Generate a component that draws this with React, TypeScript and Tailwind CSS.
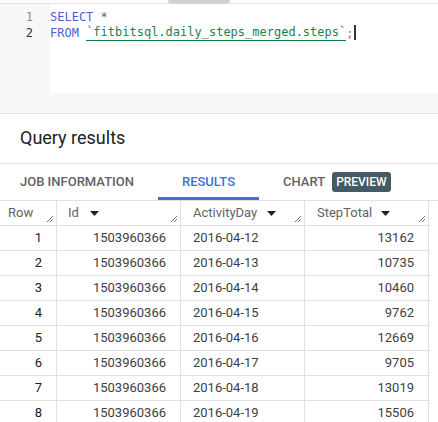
import React from "react";

const rows: [number, string, string, string][] = [
  [1, "1503960366", "2016-04-12", "13162"],
  [2, "1503960366", "2016-04-13", "10735"],
  [3, "1503960366", "2016-04-14", "10460"],
  [4, "1503960366", "2016-04-15", "9762"],
  [5, "1503960366", "2016-04-16", "12669"],
  [6, "1503960366", "2016-04-17", "9705"],
  [7, "1503960366", "2016-04-18", "13019"],
  [8, "1503960366", "2016-04-19", "15506"],
];

function Caret() {
  return (
    <svg width="9" height="5" viewBox="0 0 9 5" className="shrink-0">
      <path d="M0 0 L9 0 L4.5 5 Z" fill="#202124" />
    </svg>
  );
}

function Resize() {
  return (
    <svg width="7" height="7" viewBox="0 0 7 7" className="absolute right-[3px] bottom-[3px]">
      <path d="M1 7 L7 1 M4 7 L7 4" stroke="#5f6368" strokeWidth="0.9" />
    </svg>
  );
}

export default function App() {
  return (
    <div
      className="w-[438px] h-[422px] overflow-hidden bg-white flex flex-col relative"
      style={{ fontFamily: "Roboto, 'Noto Sans', sans-serif" }}
    >
      {/* top strip */}
      <div className="h-[4px] border-b border-[#e3e3e3] bg-white shrink-0 flex">
        <div className="ml-[168px] w-[62px] h-[2px] bg-[#cfcfcf] rounded-b-[2px] shadow-[0_1px_2px_rgba(0,0,0,0.25)]" />
      </div>

      {/* editor */}
      <div
        className="h-[89px] flex shrink-0 text-[12px] leading-[16px]"
        style={{ fontFamily: "'DejaVu Sans Mono', 'Liberation Mono', monospace" }}
      >
        <div className="w-[50px] bg-[#f8f8f8] pt-[5px] pr-[17px] text-right">
          <div className="text-[#8a8a8a]">1</div>
          <div className="text-[#333333]">2</div>
        </div>
        <div className="flex-1 bg-white pt-[5px] whitespace-pre">
          <div>
            <span className="text-[#4e5fd0]">SELECT</span>
            <span className="text-[#5f6368]"> *</span>
          </div>
          <div className="flex items-start">
            <span className="text-[#4e5fd0]">FROM </span>
            <span className="text-[#2a7d4f] border-b border-[#0b8043] leading-[15px]">
              `fitbitsql.daily_steps_merged.steps`
            </span>
            <span className="text-[#8a8a8a]">;</span>
            <span className="w-[2px] h-[15px] bg-[#333] ml-[1px]" />
          </div>
        </div>
      </div>

      {/* gray band */}
      <div className="h-[21px] bg-[#f8f8f8] border-b border-[#e0e0e0] shrink-0" />

      {/* heading */}
      <div className="h-[50px] border-b border-[#e0e0e0] flex items-center pl-[20px] shrink-0">
        <span className="text-[18px] text-[#202124] leading-none pb-[1px]">Query results</span>
      </div>

      {/* tabs */}
      <div className="h-[36px] flex items-stretch shrink-0 text-[13px] font-medium">
        <div className="w-[158px] pl-[20px] flex items-center text-[#5f6368]">JOB INFORMATION</div>
        <div className="w-[101px] flex items-center justify-center text-[#3f6fd8] border-b-[3px] border-[#3f6fd8] pt-[3px]">
          RESULTS
        </div>
        <div className="pl-[24px] flex items-center text-[#5f6368]">
          <span>CHART</span>
          <span className="ml-[7px] h-[20px] px-[4px] flex items-center bg-[#455a64] text-white rounded-[3px] text-[12px]">
            PREVIEW
          </span>
        </div>
      </div>

      {/* table */}
      <div className="flex-1 border-t border-[#e0e0e0] relative text-[13px]">
        <div className="w-[430px]">
          <div className="flex h-[25px] border-b border-[#e0e0e0] text-[#5f6368]">
            <div className="relative w-[57px] border-r border-[#e0e0e0] flex items-center pl-[8px]">
              Row
              <Resize />
            </div>
            <div className="relative w-[124px] border-r border-[#e0e0e0] flex items-center pl-[11px] gap-[11px]">
              Id
              <Caret />
              <Resize />
            </div>
            <div className="relative w-[124px] border-r border-[#e0e0e0] flex items-center pl-[12px] gap-[10px]">
              ActivityDay
              <Caret />
              <Resize />
            </div>
            <div className="relative w-[124px] border-r border-[#e0e0e0] flex items-center pl-[12px] gap-[9px]">
              StepTotal
              <Caret />
              <Resize />
            </div>
          </div>
          {rows.map(([n, id, day, steps]) => (
            <div key={n} className="flex h-[25px] border-b border-[#e0e0e0] text-[#3c4043]">
              <div className="w-[57px] border-r border-[#e0e0e0] flex items-center justify-end pr-[14px] text-[#202124]">
                {n}
              </div>
              <div className="w-[124px] border-r border-[#e0e0e0] flex items-center justify-end pr-[14px]">
                {id}
              </div>
              <div className="w-[124px] border-r border-[#e0e0e0] flex items-center pl-[12px]">{day}</div>
              <div className="w-[124px] border-r border-[#e0e0e0] flex items-center justify-end pr-[14px]">
                {steps}
              </div>
            </div>
          ))}
        </div>
        <div className="absolute left-0 right-0 bottom-0 h-[1px] flex">
          <div className="w-[93px] bg-[#e0e0e0]" />
          <div className="flex-1 bg-[#3c3c3c]" />
        </div>
      </div>
    </div>
  );
}
